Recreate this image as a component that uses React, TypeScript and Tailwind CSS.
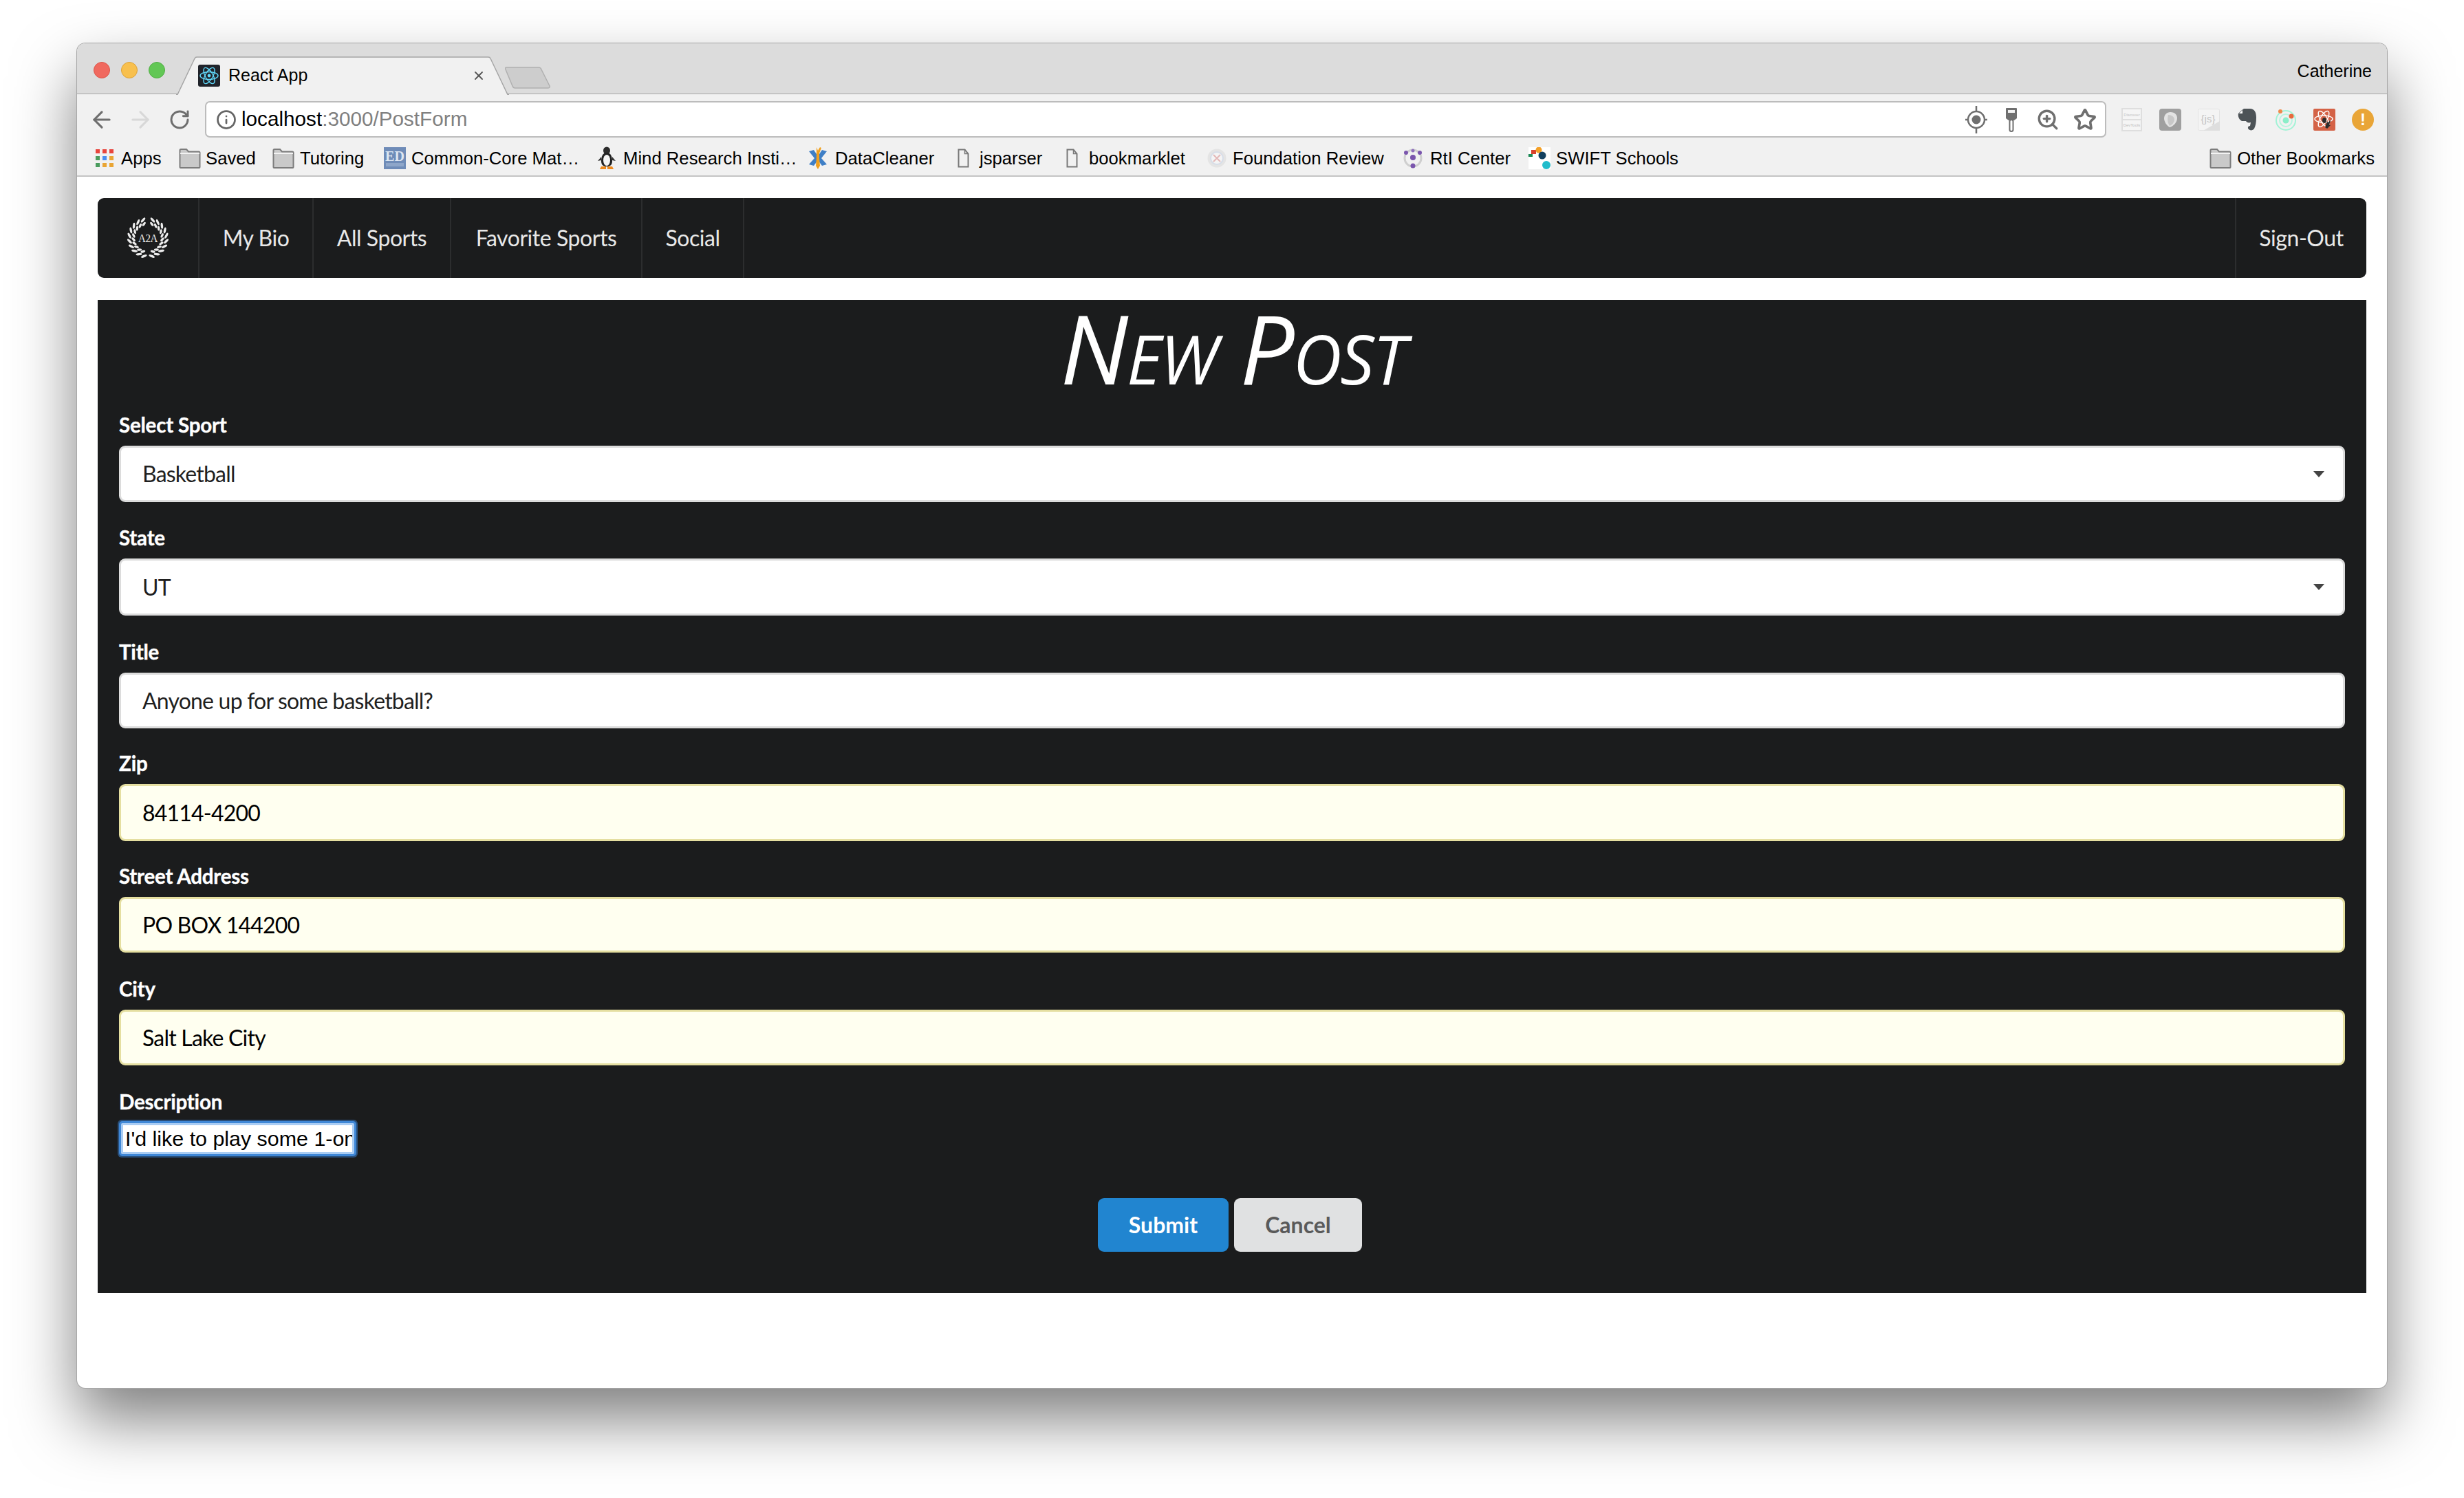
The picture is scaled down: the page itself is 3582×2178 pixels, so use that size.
import { ArrowLeft, ArrowRight, RotateCw, Info, ZoomIn, Star, X } from 'lucide-react';

const LEAVES = Array.from({ length: 10 }, (_, i) => i);

function Folder() {
  return (
    <svg width="32" height="30" viewBox="0 0 32 30">
      <path d="M1.5 28V3.5a1.5 1.5 0 0 1 1.5-1.5h8l3 3.5h15a1.5 1.5 0 0 1 1.5 1.500V28a1 1 0 0 1-1 1H2.500a1 1 0 0 1-1-1z" fill="#c9c9c9" stroke="#7c7c7c" strokeWidth="2" />
      <path d="M2 8h28" stroke="#f2f2f2" strokeWidth="2" />
    </svg>
  );
}

function FileIcon() {
  return (
    <svg width="17" height="28" viewBox="0 0 17 28" fill="none" stroke="#787878" strokeWidth="2">
      <path d="M1.500 1.500h9l5 6v19h-14z" />
      <path d="M10.500 1.500v6h5" strokeWidth="1.500" />
    </svg>
  );
}

function AppsGrid() {
  const colors = ['#e8453c', '#e8453c', '#e8453c', '#4a9c5d', '#4a8ef0', '#e9a534', '#4a9c5d', '#e9a534', '#e9a534'];
  return (
    <div className="grid grid-cols-3 gap-[4px] w-[26px]">
      {colors.map((c, i) => (
        <svg key={i} width="6" height="6"><rect width="6" height="6" fill={c} /></svg>
      ))}
    </div>
  );
}

function EdIcon() {
  return (
    <svg width="32" height="32" viewBox="0 0 32 32">
      <rect width="32" height="32" fill="#6f8cb8" />
      <text x="16" y="20" textAnchor="middle" fontFamily="Liberation Serif" fontSize="20" fontWeight="700" fill="#dfe7f2">ED</text>
      <rect x="3" y="23" width="26" height="5" fill="#8ea6c9" />
    </svg>
  );
}

function Penguin() {
  return (
    <svg width="28" height="34" viewBox="0 0 28 34">
      <ellipse cx="14" cy="6" rx="5" ry="5.500" fill="#2b2b2b" />
      <path d="M14 9c6 0 8 6 8 12s-3 8-8 8-8-2-8-8 2-12 8-12z" fill="#222" />
      <path d="M6 15L1 21l5-1zM22 15l5 6-5-1z" fill="#333" />
      <ellipse cx="14" cy="20" rx="5" ry="8" fill="#f4f4f4" />
      <path d="M6 29h7v4H4zM15 29h7l2 4h-9z" fill="#ef8a1d" />
    </svg>
  );
}

function DataCleanerIcon() {
  return (
    <svg width="28" height="34" viewBox="0 0 28 34">
      <path d="M1 7l7-2 6 9 6-9 7 2-8 10 8 9-7 2-6-8-6 8-7-2 8-9z" fill="#3f7fc6" />
      <path d="M12 1l2 5 3-5 2 1-3 8v7l1 11-3 5-3-5 1-11v-8z" fill="#f1a01d" />
    </svg>
  );
}

function FoundationIcon() {
  return (
    <svg width="28" height="30" viewBox="0 0 28 30">
      <circle cx="14" cy="15" r="13.500" fill="#e4e4e4" />
      <circle cx="14" cy="15" r="9" fill="#f4f4f4" stroke="#d6dde8" strokeWidth="2" />
      <path d="M9 10l10 10M19 10L9 20" stroke="#e3b8b8" strokeWidth="2" />
    </svg>
  );
}

function RtiIcon() {
  return (
    <svg width="28" height="30" viewBox="0 0 28 30">
      <circle cx="14" cy="15" r="12" fill="none" stroke="#cfcfcf" strokeWidth="3" />
      <circle cx="14" cy="14" r="4" fill="#7a55ad" />
      <circle cx="4" cy="7" r="3" fill="#7a55ad" />
      <circle cx="24" cy="7" r="3" fill="#7a55ad" />
      <circle cx="14" cy="4" r="2.500" fill="#8f70bd" />
      <circle cx="14" cy="26" r="3.500" fill="#7a55ad" />
    </svg>
  );
}

function SwiftIcon() {
  return (
    <svg width="32" height="32" viewBox="0 0 32 32">
      <rect width="32" height="32" fill="#fff" />
      <rect x="0" y="10" width="6" height="4" fill="#1d8a57" />
      <rect x="4" y="4" width="7" height="6" fill="#d8412b" />
      <circle cx="15" cy="4" r="4.500" fill="#f4a027" />
      <circle cx="20" cy="12" r="5.500" fill="#12405f" />
      <circle cx="26" cy="26" r="6" fill="#21bccb" />
    </svg>
  );
}

function ReactFavicon() {
  return (
    <svg width="32" height="32" viewBox="0 0 32 32">
      <rect width="32" height="32" rx="3" fill="#20232a" />
      <g fill="none" stroke="#61dafb" strokeWidth="1.400">
        <ellipse cx="16" cy="16" rx="13" ry="5.500" />
        <ellipse cx="16" cy="16" rx="13" ry="5.500" transform="rotate(60 16 16)" />
        <ellipse cx="16" cy="16" rx="13" ry="5.500" transform="rotate(120 16 16)" />
      </g>
      <circle cx="16" cy="16" r="2.400" fill="#61dafb" />
    </svg>
  );
}

function TargetIcon() {
  return (
    <svg width="32" height="44" viewBox="0 0 32 44" fill="none" stroke="#6f6f6f" strokeWidth="2.500">
      <circle cx="16" cy="22" r="12" />
      <circle cx="16" cy="22" r="6.500" fill="#6f6f6f" stroke="none" />
      <path d="M16 2v8M16 34v8M0 22h4M28 22h4" />
    </svg>
  );
}

function KeyIcon() {
  return (
    <svg width="18" height="36" viewBox="0 0 18 36">
      <path d="M2 1h14a1 1 0 0 1 1 1v14l-4 3H5l-4-3V2a1 1 0 0 1 1-1z" fill="#6f6f6f" />
      <rect x="4" y="4" width="10" height="4" fill="#f2f2f2" />
      <rect x="6.500" y="18" width="5" height="17" rx="2.500" fill="#fff" stroke="#6f6f6f" strokeWidth="2" />
    </svg>
  );
}

function DevToolsExt() {
  return (
    <svg width="30" height="34" viewBox="0 0 30 34">
      <rect x="1" y="1" width="28" height="32" fill="#f5f5f5" stroke="#dedede" strokeWidth="2" />
      <rect x="1" y="16" width="28" height="2" fill="#dedede" />
      <text x="15" y="12" textAnchor="middle" fontSize="6" fill="#c4c4c4" fontFamily="Liberation Sans">Discover</text>
      <text x="15" y="27" textAnchor="middle" fontSize="6" fill="#bdbdbd" fontFamily="Liberation Sans">DevTools</text>
    </svg>
  );
}

function OperaExt() {
  return (
    <svg width="32" height="32" viewBox="0 0 32 32">
      <rect width="32" height="32" rx="4" fill="#9f9f9f" />
      <path d="M16 5c7 0 10 4 10 9 0 6-6 12-11 13-4-2-8-8-8-13 0-5 4-9 9-9z" fill="#e3e3e3" />
      <path d="M13 9c5 0 9 3 9 7s-4 8-7 9c-2-3-4-8-2-16z" fill="#c8c8c8" />
    </svg>
  );
}

function JsExt() {
  return (
    <svg width="32" height="32" viewBox="0 0 32 32">
      <rect x="0.500" y="0.500" width="31" height="31" rx="2" fill="#f4f4f4" stroke="#e3e3e3" />
      <text x="15" y="20" textAnchor="middle" fontSize="15" fill="#c4c4c4" fontFamily="Liberation Sans">{'{js}'}</text>
      <path d="M8 32l24-14v14z" fill="#dedede" />
    </svg>
  );
}

function ElephantExt() {
  return (
    <svg width="28" height="34" viewBox="0 0 28 34">
      <path d="M5 4l4-3h9c6 0 9 5 9 13 0 7-1 12-3 16-2 3-6 3-8 1-2-2-1-5 2-5l1-5c-3 1-6 0-7-2H6C2 17 0 12 1 8z" fill="#4d5357" />
      <path d="M2 8h5V3z" fill="#fff" />
    </svg>
  );
}

function OrbitExt() {
  return (
    <svg width="32" height="34" viewBox="0 0 32 34" fill="none">
      <circle cx="16" cy="18" r="14" stroke="#a2f3d6" strokeWidth="2" />
      <circle cx="16" cy="18" r="9" stroke="#b8f5df" strokeWidth="2" />
      <circle cx="16" cy="18" r="4.500" fill="#8beec9" />
      <circle cx="8" cy="5" r="3" fill="#ef8a4a" />
      <circle cx="24" cy="12" r="3.500" fill="#e8693d" />
    </svg>
  );
}

function AtomExt() {
  return (
    <svg width="32" height="32" viewBox="0 0 32 32">
      <rect width="32" height="32" rx="2" fill="#d46246" />
      <g fill="none" stroke="#fff" strokeWidth="1.400">
        <ellipse cx="15" cy="15" rx="13" ry="5" />
        <ellipse cx="15" cy="15" rx="13" ry="5" transform="rotate(60 15 15)" />
        <ellipse cx="15" cy="15" rx="13" ry="5" transform="rotate(120 15 15)" />
      </g>
      <ellipse cx="16" cy="17" rx="3" ry="4" fill="#2c2c2c" />
      <path d="M17 27l3-8 2 1 2-3 1 1-2 5 2 1-5 5z" fill="#2c2c2c" />
    </svg>
  );
}

function AlertExt() {
  return (
    <div className="w-[32px] h-[32px] rounded-full bg-[#e9a537] flex items-center justify-center text-white font-bold text-[24px] leading-none font-['Liberation_Sans',sans-serif]">
      !
    </div>
  );
}

// wreath open at the top, two staggered rows of leaves on each side
function Laurel() {
  const leaf = (r: number, deg: number, key: string, rx: number) => {
    const a = (deg * Math.PI) / 180;
    const x = r * Math.cos(a);
    const y = -r * Math.sin(a);
    return (
      <g key={key}>
        <ellipse cx={32 + x} cy={32 + y} rx={rx} ry="1.700" transform={`rotate(${-deg - 55} ${32 + x} ${32 + y})`} />
        <ellipse cx={32 - x} cy={32 + y} rx={rx} ry="1.700" transform={`rotate(${deg + 55} ${32 - x} ${32 + y})`} />
      </g>
    );
  };
  return (
    <svg width="64" height="64" viewBox="0 0 64 64">
      <g fill="#ececec">
        {LEAVES.map(i => leaf(27, -78 + i * 17, `o${i}`, 4.5))}
        {LEAVES.map(i => leaf(21, -70 + i * 16, `i${i}`, 3.5))}
      </g>
      <text x="32" y="38" textAnchor="middle" fontFamily="Liberation Serif" fontSize="17" fill="#ededed" textLength="28" lengthAdjust="spacingAndGlyphs">A2A</text>
    </svg>
  );
}

function Caret() {
  return (
    <svg width="16" height="9" viewBox="0 0 16 9" className="ml-auto mr-[27px]">
      <path d="M0 0h16L8 9z" fill="#444" />
    </svg>
  );
}

interface FieldProps {
  label: string;
  value: string;
  box: string;
  autofill?: boolean;
  select?: boolean;
}

function Field({ label, value, box, autofill, select }: FieldProps) {
  return (
    <div>
      <div className="h-[36px] leading-[36px] mb-[12px] text-[29.5px] font-bold text-white tracking-[-0.2px] [-webkit-text-stroke:0.4px_white]">{label}</div>
      <div
        className={`${box} flex items-center pl-[31px] rounded-[9px] border-[3px] text-[32px] tracking-[-0.8px] ${
          autofill ? 'bg-[#fffff0] border-[#e5dfa1] text-black' : 'bg-white border-[#dcdcdc] text-[#1f1f1f]'
        }`}
      >
        {value}
        {select && <Caret />}
      </div>
    </div>
  );
}

export default function App() {
  return (
    <div className="min-h-[2178px] bg-white pt-[63px] pl-[112px] overflow-hidden">
      <div className="w-[3358px] h-[1955px] bg-white rounded-[12px] overflow-hidden shadow-[0_0_0_1px_#a6a6a6,0_46px_90px_rgba(0,0,0,0.5)] font-['Liberation_Sans',sans-serif]">
        {/* tab strip */}
        <div className="h-[74px] bg-[#dcdcdc] border-b-[1.5px] border-[#a5a5a5] flex items-end pl-[24px]">
          <div className="self-start mt-[27px] flex gap-[16px]">
            <div className="w-[24px] h-[24px] rounded-full bg-[#f0695f] border border-[#dd5449]" />
            <div className="w-[24px] h-[24px] rounded-full bg-[#f8c04e] border border-[#dea235]" />
            <div className="w-[24px] h-[24px] rounded-full bg-[#62c755] border border-[#4fae43]" />
          </div>
          <div className="relative top-[2px] ml-[16px] w-[484px] h-[56px] flex items-center pl-[32px] pr-[34px]">
            <svg width="484" height="56" viewBox="0 0 484 56" className="absolute inset-0">
              <path d="M0 55.500h2L27 3q1-2 3-2h424q2 0 3 2l25 52.500h2" fill="#f1f1f1" stroke="#a5a5a5" strokeWidth="1.500" />
            </svg>
            <div className="relative flex items-center gap-[12px] w-full">
              <ReactFavicon />
              <span className="text-[25px] text-black">React App</span>
              <X className="ml-auto text-[#555]" size={20} strokeWidth={2.2} />
            </div>
          </div>
          <svg width="66" height="32" viewBox="0 0 66 32" className="self-start mt-[34px] ml-[-6px]">
            <path d="M2 1h47q3 0 4 3l12 24q1 3-3 3H15q-3 0-4-3L1 4q-1-3 1-3z" fill="#cdcdcd" stroke="#b0b0b0" strokeWidth="1.500" />
          </svg>
          <span className="self-start mt-[24px] ml-auto mr-[22px] text-[25px] leading-[32px] text-black">Catherine</span>
        </div>

        {/* toolbar */}
        <div className="h-[68px] bg-[#f1f1f1] flex items-start pt-[10px] pl-[17px]">
          <div className="flex items-center h-[53px] w-[169px] text-[#6e6e6e]">
            <ArrowLeft size={38} strokeWidth={2} />
            <ArrowRight size={38} strokeWidth={2} className="ml-[18px] text-[#d8d8d8]" />
            <RotateCw size={32} strokeWidth={2.2} className="ml-[22px]" />
          </div>
          <div className="w-[2764px] h-[53px] bg-white border-2 border-[#bcbcbc] rounded-[7px] flex items-center pl-[14px] pr-[12px]">
            <Info size={30} strokeWidth={2.2} className="text-[#666]" />
            <span className="ml-[7px] text-[29.7px] text-black">
              localhost<span className="text-[#808080]">:3000/PostForm</span>
            </span>
            <div className="ml-auto flex items-center text-[#6f6f6f]">
              <TargetIcon />
              <div className="ml-[26px]"><KeyIcon /></div>
              <ZoomIn size={34} strokeWidth={2.4} className="ml-[27px]" />
              <Star size={34} strokeWidth={2.6} className="ml-[20px]" />
            </div>
          </div>
          <div className="h-[53px] flex items-center pl-[9px]">
            <div className="w-[56px] flex justify-center"><DevToolsExt /></div>
            <div className="w-[56px] flex justify-center"><OperaExt /></div>
            <div className="w-[56px] flex justify-center"><JsExt /></div>
            <div className="w-[56px] flex justify-center"><ElephantExt /></div>
            <div className="w-[56px] flex justify-center"><OrbitExt /></div>
            <div className="w-[56px] flex justify-center"><AtomExt /></div>
            <div className="w-[56px] flex justify-center"><AlertExt /></div>
          </div>
        </div>

        {/* bookmarks */}
        <div className="h-[52px] bg-[#f1f1f1] border-b-2 border-[#c4c4c4] flex items-center pl-[27px] text-[25.7px] text-black whitespace-nowrap">
          <div className="w-[121px] flex items-center"><div className="w-[37px]"><AppsGrid /></div>Apps</div>
          <div className="w-[136px] flex items-center"><div className="w-[39px]"><Folder /></div>Saved</div>
          <div className="w-[162px] flex items-center"><div className="w-[40px]"><Folder /></div>Tutoring</div>
          <div className="w-[310px] flex items-center"><div className="w-[40px]"><EdIcon /></div>Common-Core Mat…</div>
          <div className="w-[307px] flex items-center"><div className="w-[38px]"><Penguin /></div>Mind Research Insti…</div>
          <div className="w-[217px] flex items-center"><div className="w-[39px]"><DataCleanerIcon /></div>DataCleaner</div>
          <div className="w-[158px] flex items-center"><div className="w-[32px]"><FileIcon /></div>jsparser</div>
          <div className="w-[205px] flex items-center"><div className="w-[33px]"><FileIcon /></div>bookmarklet</div>
          <div className="w-[285px] flex items-center"><div className="w-[37px]"><FoundationIcon /></div>Foundation Review</div>
          <div className="w-[182px] flex items-center"><div className="w-[39px]"><RtiIcon /></div>RtI Center</div>
          <div className="flex items-center"><div className="w-[40px]"><SwiftIcon /></div>SWIFT Schools</div>
          <div className="ml-auto mr-[18px] flex items-center"><div className="w-[40px]"><Folder /></div>Other Bookmarks</div>
        </div>

        {/* page */}
        <div className="px-[30px] pt-[31px] font-['Lato',sans-serif]">
          <nav className="h-[116px] bg-[#1b1c1d] rounded-[9px] flex items-stretch text-[32px] text-[#e8e8e8] tracking-[-0.45px]">
            <div className="w-[148px] border-r-2 border-[#2c2d2e] flex items-center justify-center"><Laurel /></div>
            <div className="w-[166px] border-r-2 border-[#2c2d2e] flex items-center justify-center">My Bio</div>
            <div className="w-[200px] border-r-2 border-[#2c2d2e] flex items-center justify-center">All Sports</div>
            <div className="w-[278px] border-r-2 border-[#2c2d2e] flex items-center justify-center">Favorite Sports</div>
            <div className="w-[148px] border-r-2 border-[#2c2d2e] flex items-center justify-center">Social</div>
            <div className="ml-auto w-[191px] border-l-2 border-[#2c2d2e] flex items-center justify-center">Sign-Out</div>
          </nav>

          <div className="mt-[32px] h-[1444px] bg-[#1b1c1d] px-[31px]">
            <h1 className="h-[164px] pl-[2px] flex items-start justify-center font-['Open_Sans',sans-serif] italic text-white text-[140px] leading-[138px] tracking-[-2px] font-medium [font-variant:small-caps]">
              New Post
            </h1>
            <Field label="Select Sport" value="Basketball" box="h-[82px]" select />
            <div className="mt-[34px]"><Field label="State" value="UT" box="h-[83px]" select /></div>
            <div className="mt-[35px]"><Field label="Title" value="Anyone up for some basketball?" box="h-[81px]" /></div>
            <div className="mt-[33px]"><Field label="Zip" value="84114-4200" box="h-[83px]" autofill /></div>
            <div className="mt-[33px]"><Field label="Street Address" value="PO BOX 144200" box="h-[81px]" autofill /></div>
            <div className="mt-[35px]"><Field label="City" value="Salt Lake City" box="h-[81px]" autofill /></div>
            <div className="mt-[35px] h-[36px] leading-[36px] mb-[13px] text-[29.5px] font-bold text-white tracking-[-0.2px] [-webkit-text-stroke:0.4px_white]">Description</div>
            <div className="ml-[3px] w-[339px] h-[45px] bg-white rounded-[2px] border-[3px] border-[#a9ccf3] shadow-[0_0_0_3px_#3f87d6,0_0_0_5px_#2a4f7a] pl-[3px] flex items-center overflow-hidden font-['Liberation_Sans',sans-serif] text-[30.4px] text-black whitespace-nowrap">
              I'd like to play some 1-on-1
            </div>
            <div className="mt-[64px] pr-[6px] flex justify-center gap-[8px]">
              <button className="w-[190px] h-[78px] rounded-[9px] bg-[#2185d0] text-white text-[32px] font-bold">Submit</button>
              <button className="w-[186px] h-[78px] rounded-[9px] bg-[#e0e1e2] text-[#5a5a5a] text-[32px] font-bold">Cancel</button>
            </div>
          </div>
        </div>
      </div>
    </div>
  );
}
